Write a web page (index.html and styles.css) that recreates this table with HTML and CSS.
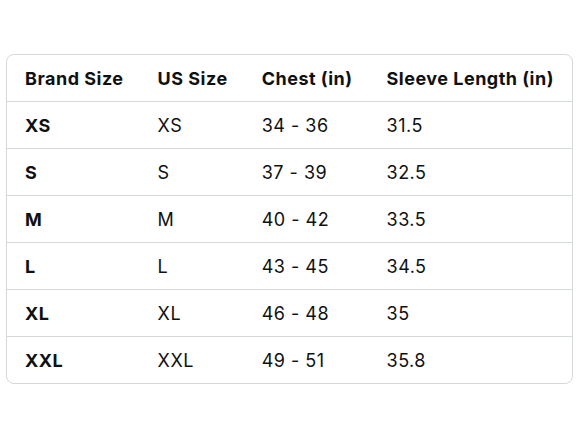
FILE: index.html
```html
<!DOCTYPE html>
<html lang="en">
<head>
<meta charset="utf-8">
<title>Size chart</title>
<link rel="stylesheet" href="styles.css">
</head>
<body>
<div class="chart">
  <table class="size-table">
    <thead>
      <tr><th>Brand Size</th><th>US Size</th><th>Chest (in)</th><th class="last">Sleeve Length (in)</th></tr>
    </thead>
    <tbody>
      <tr><th>XS</th><td>XS</td><td>34 - 36</td><td class="last">31.5</td></tr>
      <tr><th>S</th><td>S</td><td>37 - 39</td><td class="last">32.5</td></tr>
      <tr><th>M</th><td>M</td><td>40 - 42</td><td class="last">33.5</td></tr>
      <tr><th>L</th><td>L</td><td>43 - 45</td><td class="last">34.5</td></tr>
      <tr><th>XL</th><td>XL</td><td>46 - 48</td><td class="last">35</td></tr>
      <tr><th>XXL</th><td>XXL</td><td>49 - 51</td><td class="last">35.8</td></tr>
    </tbody>
  </table>
</div>
</body>
</html>
```
FILE: styles.css
```css
html, body {
  margin: 0;
  background: #ffffff;
}
body {
  padding: 54px 15px 0 6px;
  font-family: Inter, "Liberation Sans", sans-serif;
  color: #0f1111;
}
.chart {
  border: 1px solid #d5d9d9;
  border-radius: 8px;
  overflow: hidden;
}
.size-table {
  width: 100%;
  border-collapse: collapse;
  font-size: 18px;
  letter-spacing: 0.5px;
}
.size-table th,
.size-table td {
  height: 46px;
  padding: 0 16px 0 18px;
  text-align: left;
  white-space: nowrap;
  vertical-align: middle;
  font-weight: 400;
}
.size-table th {
  font-weight: 700;
}
.size-table tbody th,
.size-table tbody td {
  border-top: 1px solid #d5d9d9;
}
.size-table .last {
  width: 100%;
}
```
